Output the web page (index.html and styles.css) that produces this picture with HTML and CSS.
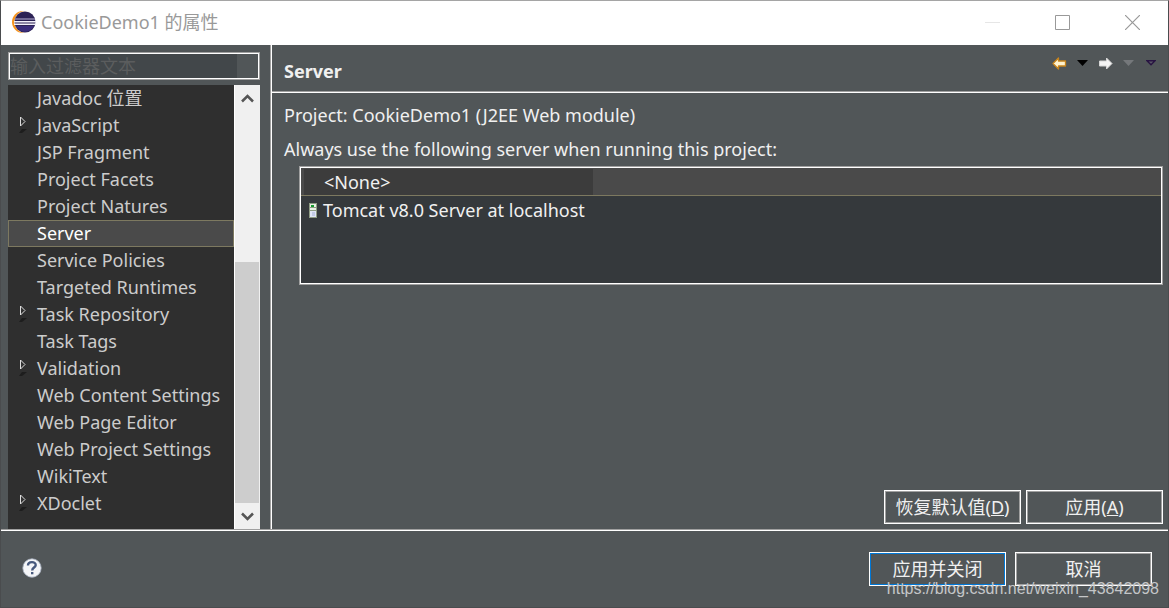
FILE: index.html
```html
<!DOCTYPE html>
<html lang="zh-CN">
<head>
<meta charset="utf-8">
<title>CookieDemo1 的属性</title>
<link rel="stylesheet" href="styles.css">
</head>
<body>
<div class="window">
  <header class="titlebar">
    <svg class="logo" width="24" height="22" viewBox="0 0 24 22" aria-hidden="true">
      <circle cx="11" cy="11" r="11" fill="#f7941e"/>
      <circle cx="13.500" cy="11" r="11" fill="#fff"/>
      <circle cx="13" cy="11" r="10.500" fill="#2c2255"/>
      <path d="M4 15h18a10 10 0 0 1-18 0z" fill="#3b2d7c"/>
      <path d="M3 7.500h20v1H3z" fill="#b9b3d6"/>
      <path d="M2 10h22v1.500H2zM2 12.500h22V14H2z" fill="#f2f0fa"/>
    </svg>
    <h1 class="title">CookieDemo1 的属性</h1>
    <div class="controls">
      <button class="control" type="button" aria-label="最小化" disabled><svg width="15" height="15"><path d="M0 7.500h15" stroke="#e6e6e6"/></svg></button>
      <button class="control" type="button" aria-label="最大化"><svg width="15" height="15"><path d="M.5.5h14v14H.5z" fill="none" stroke="#999"/></svg></button>
      <button class="control" type="button" aria-label="关闭"><svg width="15" height="15"><path d="M0 0l15 15M15 0L0 15" stroke="#999" stroke-width="1.200"/></svg></button>
    </div>
  </header>
  <div class="content">
    <nav class="sidebar">
      <input class="filter" type="text" placeholder="输入过滤器文本" aria-label="输入过滤器文本">
      <div class="tree-pane">
        <ul class="tree">
          <li class="node">Javadoc 位置</li>
          <li class="node parent"><svg class="twisty" width="8" height="18"><path d="M1.500 1v9L6 5.500z" fill="none" stroke="#ddd"/><path d="M0 17l3-4h5l-5 4z" fill="#1d1d1d"/></svg>JavaScript</li>
          <li class="node">JSP Fragment</li>
          <li class="node">Project Facets</li>
          <li class="node">Project Natures</li>
          <li class="node selected">Server</li>
          <li class="node">Service Policies</li>
          <li class="node">Targeted Runtimes</li>
          <li class="node parent"><svg class="twisty" width="8" height="18"><path d="M1.500 1v9L6 5.500z" fill="none" stroke="#ddd"/><path d="M0 17l3-4h5l-5 4z" fill="#1d1d1d"/></svg>Task Repository</li>
          <li class="node">Task Tags</li>
          <li class="node parent"><svg class="twisty" width="8" height="18"><path d="M1.500 1v9L6 5.500z" fill="none" stroke="#ddd"/><path d="M0 17l3-4h5l-5 4z" fill="#1d1d1d"/></svg>Validation</li>
          <li class="node">Web Content Settings</li>
          <li class="node">Web Page Editor</li>
          <li class="node">Web Project Settings</li>
          <li class="node">WikiText</li>
          <li class="node parent"><svg class="twisty" width="8" height="18"><path d="M1.500 1v9L6 5.500z" fill="none" stroke="#ddd"/><path d="M0 17l3-4h5l-5 4z" fill="#1d1d1d"/></svg>XDoclet</li>
        </ul>
        <div class="scrollbar">
          <button class="scroll-button" type="button" aria-label="向上滚动"><svg width="13" height="10"><path d="M1 8.500L6.500 3 12 8.500" fill="none" stroke="#555" stroke-width="2.500"/></svg></button>
          <div class="track"><div class="thumb"></div></div>
          <button class="scroll-button" type="button" aria-label="向下滚动"><svg width="13" height="10"><path d="M1 2.500L6.500 8 12 2.500" fill="none" stroke="#555" stroke-width="2.500"/></svg></button>
        </div>
      </div>
    </nav>
    <main class="page">
      <div class="page-header">
        <h2 class="page-title">Server</h2>
        <div class="toolbar">
          <button class="tool" type="button" aria-label="后退"><svg width="15" height="13"><path d="M1 6.500L6.500 1v3h7v5h-7v3z" fill="#fff3cf" stroke="#c8841c" stroke-width="1.300" stroke-linejoin="round"/></svg></button>
          <button class="tool" type="button" aria-label="后退历史"><svg width="11" height="6"><path d="M0 0h11L5.500 6z" fill="#000"/></svg></button>
          <button class="tool" type="button" aria-label="前进"><svg width="15" height="13"><path d="M14 6.500L8.500 1v3h-7v5h7v3z" fill="#f4f4f4" stroke="#d6d6d6" stroke-linejoin="round"/></svg></button>
          <button class="tool" type="button" aria-label="前进历史" disabled><svg width="11" height="6"><path d="M0 0h11L5.500 6z" fill="#75787b"/></svg></button>
          <button class="tool menu" type="button" aria-label="菜单"><svg width="10" height="6"><path d="M1 .7h8L5 4.700z" fill="#5b5566" stroke="#281442" stroke-width="1.400"/></svg></button>
        </div>
      </div>
      <div class="page-body">
        <p class="line">Project: CookieDemo1 (J2EE Web module)</p>
        <p class="line" id="servers">Always use the following server when running this project:</p>
        <ul class="server-list" aria-labelledby="servers">
          <li class="server chosen"><span class="server-name">&lt;None&gt;</span></li>
          <li class="server"><svg class="server-icon" width="8" height="15"><path d="M0 0h8v15H0z" fill="#8f9c84"/><path d="M1 1h6v3H1zM1 5h6v2H1z" fill="#e9f0e4"/><path d="M2 2h3v2H2z" fill="#149a2d"/><path d="M1 8h6v6H1z" fill="#e1e6f6"/><path d="M3 9h3v4H3z" fill="#c3cbe6"/></svg>Tomcat v8.0 Server at localhost</li>
        </ul>
        <div class="page-actions">
          <button class="button" type="button">恢复默认值(<u>D</u>)</button>
          <button class="button" type="button">应用(<u>A</u>)</button>
        </div>
      </div>
    </main>
  </div>
  <footer class="footer">
    <button class="help" type="button" aria-label="帮助"><svg width="20" height="20"><circle cx="10" cy="10" r="9.200" fill="#f5f6f8" stroke="#aab4c4" stroke-width=".8"/><path d="M6 7.500C6 3 14 3.200 13.700 7.100 13.500 9.500 10.200 9.600 10.200 12.400" fill="none" stroke="#485a7e" stroke-width="2.400"/><path d="M9 14h2.400v2.300H9z" fill="#485a7e"/></svg></button>
    <div class="footer-actions">
      <button class="button primary" type="button">应用并关闭</button>
      <button class="button" type="button">取消</button>
    </div>
  </footer>
  <div class="watermark">https://blog.csdn.net/weixin_43842098</div>
</div>
</body>
</html>
```
FILE: styles.css
```css
* { box-sizing: border-box; }

body {
  margin: 0;
  background: #515658;
  color: #f0f0f0;
  font: 18px/26px "Noto Sans", "Noto Sans CJK SC", sans-serif;
}

h1, h2, p, ul { margin: 0; padding: 0; font-size: inherit; }
ul { list-style: none; }
svg { display: block; flex: none; }

button {
  padding: 0;
  border: 0;
  background: none;
  color: inherit;
  font: inherit;
}

.window {
  position: relative;
  display: flex;
  flex-direction: column;
  min-height: 100vh;
  border: 1px solid #4a4c4e;
  border-top-color: #a5a5a5;
}

.titlebar {
  display: flex;
  align-items: center;
  height: 44px;
  padding: 0 1px 2px 11px;
  background: #fff;
}
.title { margin-left: 5px; color: #999; font-weight: 400; }
.controls { display: flex; margin-left: auto; }
.control {
  display: flex;
  align-items: center;
  justify-content: center;
  width: 70px;
  height: 42px;
}

.content { display: flex; flex: 1; }

.sidebar {
  display: flex;
  flex-direction: column;
  gap: 5px;
  width: 270px;
  padding: 7px 10px 0 7px;
  border-right: 1px solid #a0a0a0;
}
.filter {
  height: 28px;
  padding: 0 1px;
  border: 1px solid #a0a0a0;
  border-radius: 0;
  outline: 1px solid #fff;
  outline-offset: -2px;
  background: linear-gradient(to left, #515658 22px, #42474a 22px);
  color: #eee;
  font: inherit;
}
.filter::placeholder { color: #5b5d5e; opacity: 1; }

.tree-pane { display: flex; flex: 1; }
.tree { flex: 1; background: #2f2f2f; color: #ccc; }
.node {
  display: flex;
  align-items: center;
  height: 27px;
  padding: 0 0 2px 28px;
  border: 1px solid transparent;
  white-space: nowrap;
}
.node.parent { padding-left: 10px; }
.twisty { margin-right: 10px; }
.node.selected { border-color: #7d7960; background: #4a4a4a; color: #fff; }

.scrollbar {
  display: flex;
  flex-direction: column;
  width: 26px;
  border-left: 1px solid #fff;
  background: #f0f0f0;
}
.scroll-button {
  display: flex;
  align-items: center;
  justify-content: center;
  height: 26px;
}
.track { display: flex; flex: 1; flex-direction: column; justify-content: flex-end; }
.thumb { height: 61.5%; margin-right: 1px; background: #cdcdcd; }

.page {
  display: flex;
  flex: 1;
  flex-direction: column;
  border-left: 1px solid #fff;
}
.page-header {
  display: flex;
  height: 47px;
  padding: 13px 12px 0;
  border-bottom: 1px solid #a0a0a0;
}
.page-title { font-weight: 700; }
.toolbar {
  display: flex;
  align-items: center;
  gap: 10px;
  height: 10px;
  margin-left: auto;
}
.menu { margin-left: 2px; }

.page-body {
  display: flex;
  flex: 1;
  flex-direction: column;
  padding: 9px 5px 5px 12px;
  border-top: 1px solid #fff;
}
.line { margin-bottom: 8px; }
.server-list {
  height: 119px;
  margin: -4px 0 0 15px;
  border: 1px solid #a0a0a0;
  outline: 1px solid #fff;
  outline-offset: -2px;
  padding: 1px;
  background: #35393c;
}
.server {
  display: flex;
  align-items: center;
  gap: 6px;
  height: 28px;
  padding-left: 8px;
}
.server.chosen {
  padding-left: 3px;
  border-bottom: 1px solid #7d7960;
  background: #4a4a4a;
}
.server-name {
  width: 289px;
  padding-left: 20px;
  background: #3c3c3c;
}
.page-actions {
  display: flex;
  gap: 5px;
  justify-content: flex-end;
  margin-top: auto;
}

.button {
  width: 137px;
  height: 34px;
  border: 1px solid #fff;
  box-shadow: inset 0 0 0 1px #a0a0a0;
}
.button.primary { box-shadow: inset 0 0 0 1px #0078d7; }

.footer {
  display: flex;
  align-items: center;
  justify-content: space-between;
  height: 78px;
  padding: 0 16px 0 21px;
  border-top: 1px solid #a0a0a0;
  box-shadow: inset 0 1px #fff;
}
.help { margin-bottom: 1px; }
.footer-actions { display: flex; gap: 9px; }

.watermark {
  position: absolute;
  right: 9px;
  bottom: 8px;
  color: #c4c6c8;
  font: 16px/20px "Liberation Sans", Arial, sans-serif;
  pointer-events: none;
}
```
